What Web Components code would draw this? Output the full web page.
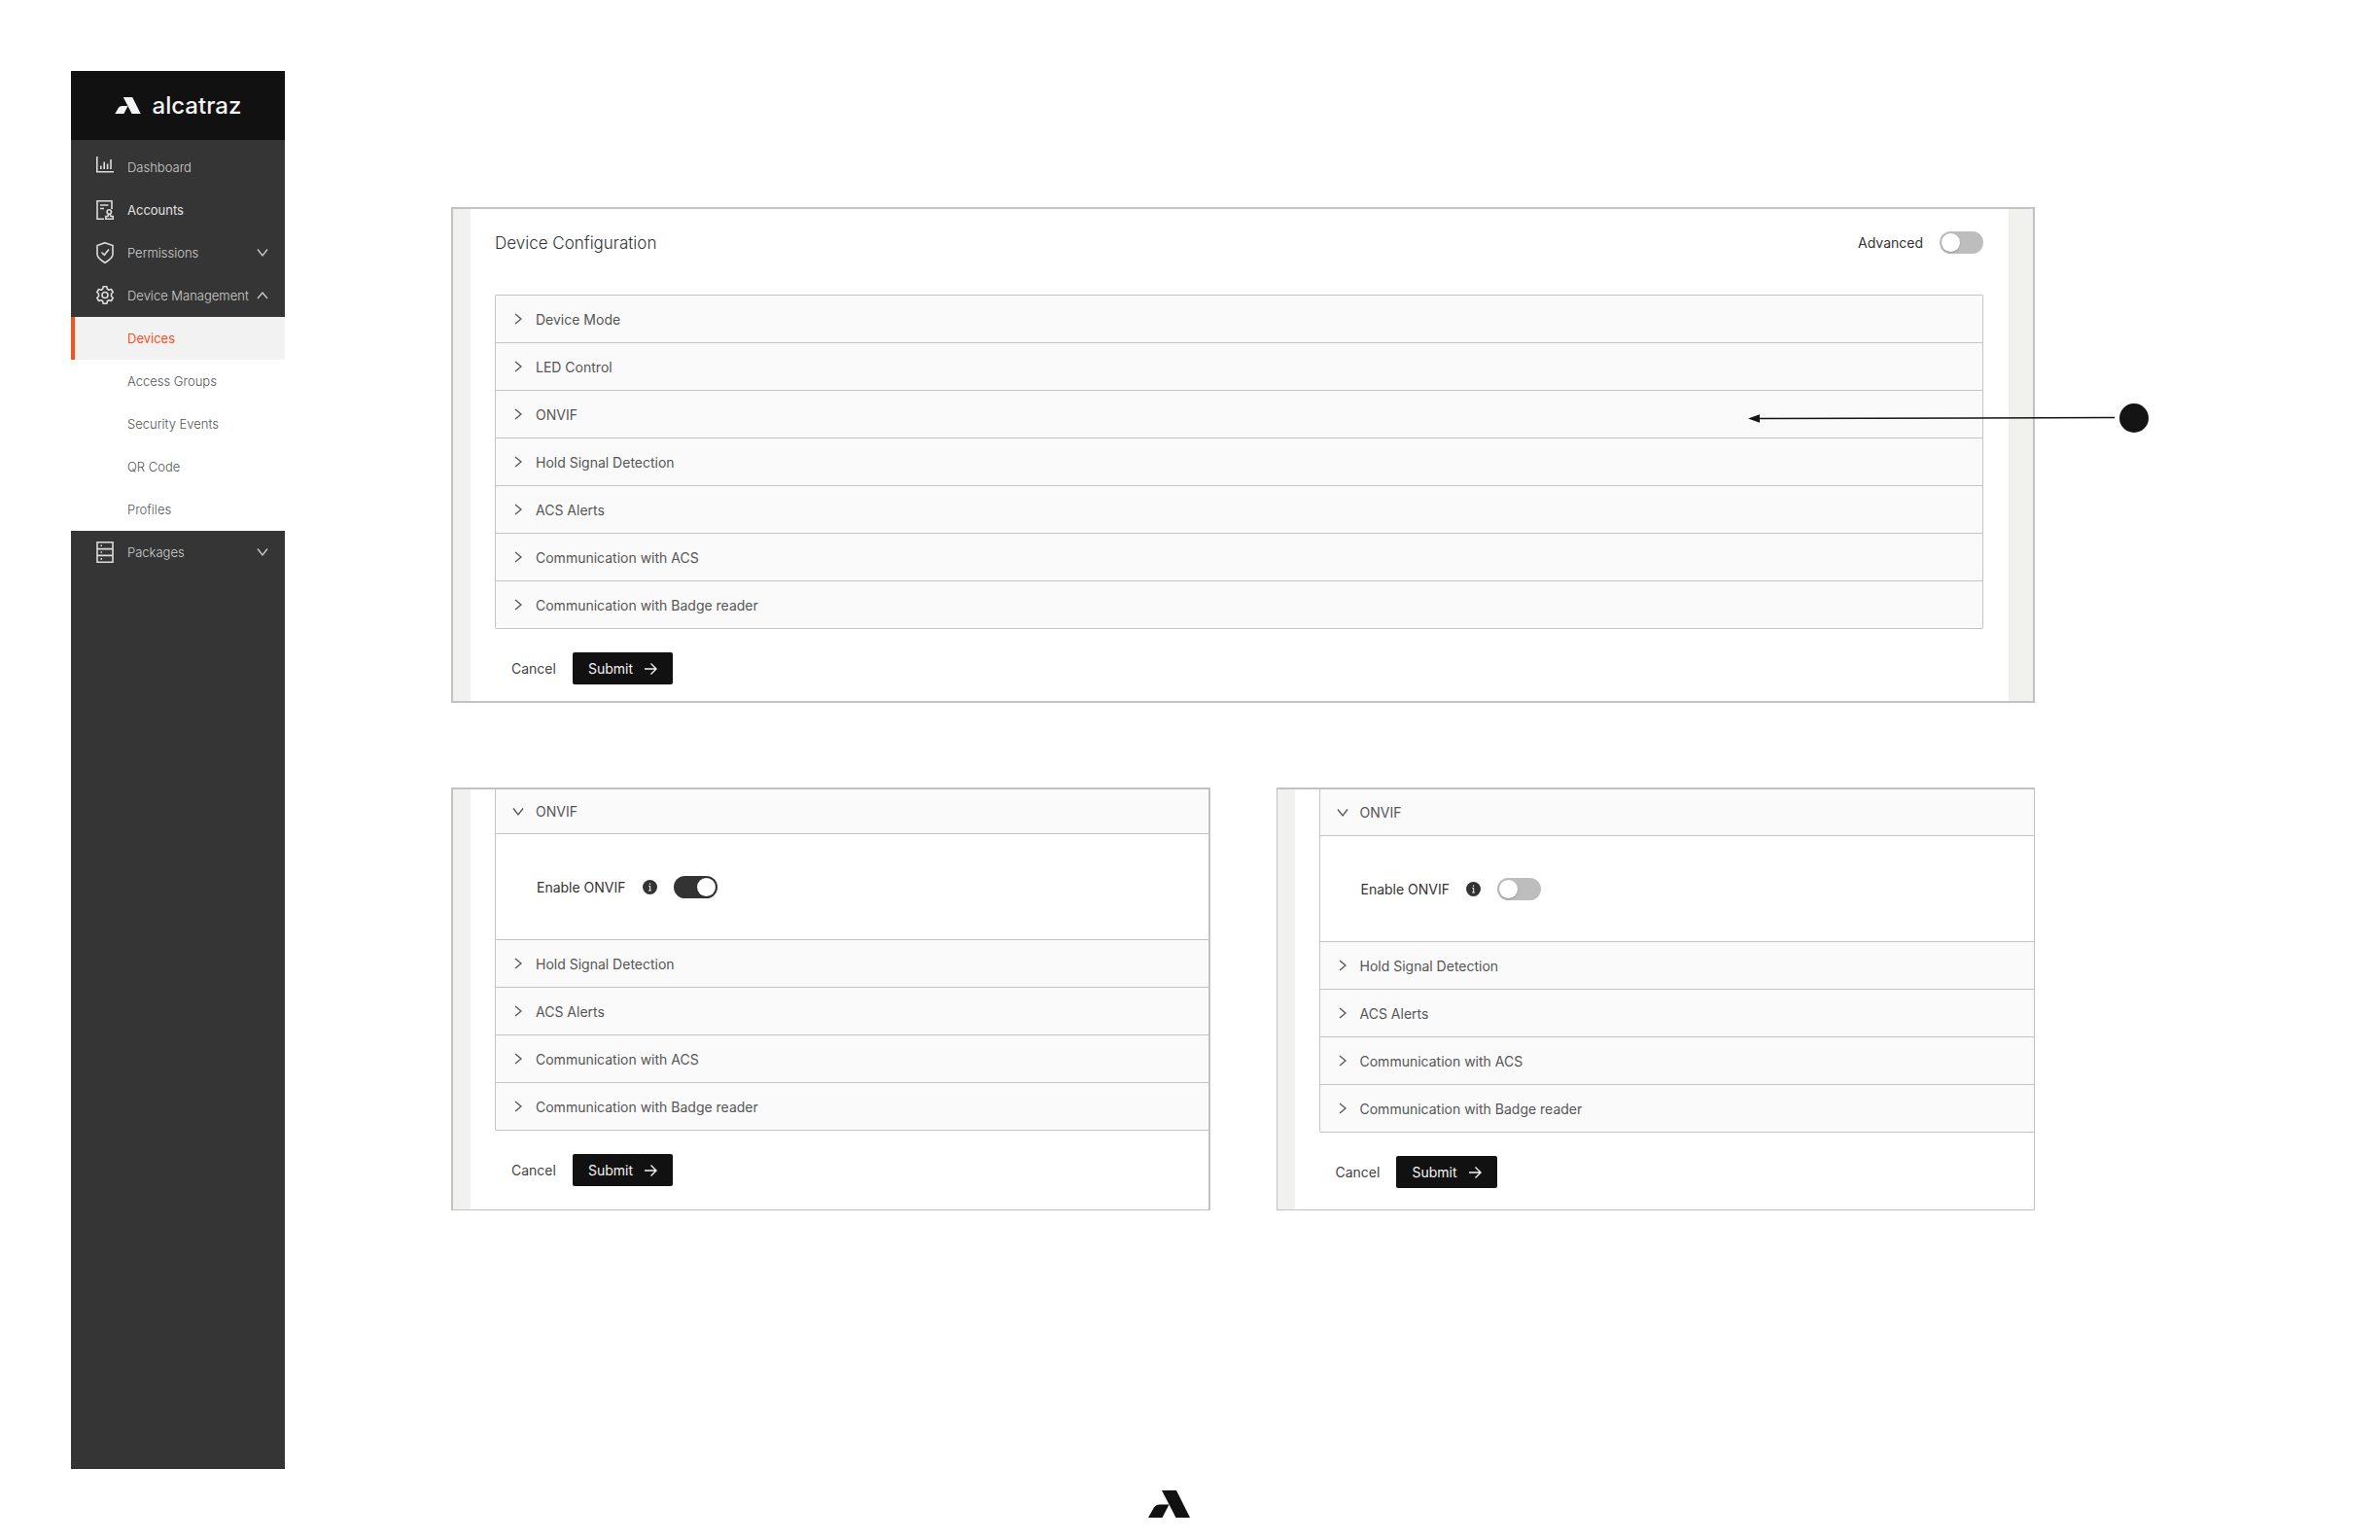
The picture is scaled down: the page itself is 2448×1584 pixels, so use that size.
<!DOCTYPE html>
<html lang="en">
<head>
<meta charset="utf-8">
<title>Alcatraz – Device Configuration</title>
<style>
  html { background: #fff; }
  body { margin: 0; font-family: Inter, "Liberation Sans", sans-serif; font-size: 14px; color: #555; }
</style>
</head>
<body>
<admin-page>
  <side-bar slot="nav">
    <nav-item icon="chart">Dashboard</nav-item>
    <nav-item icon="account" strong>Accounts</nav-item>
    <nav-item icon="shield" arrow="down">Permissions</nav-item>
    <nav-item icon="gear" arrow="up">Device Management</nav-item>
    <nav-item sub active>Devices</nav-item>
    <nav-item sub>Access Groups</nav-item>
    <nav-item sub>Security Events</nav-item>
    <nav-item sub>QR Code</nav-item>
    <nav-item sub>Profiles</nav-item>
    <nav-item icon="server" arrow="down">Packages</nav-item>
  </side-bar>

  <config-panel full>
    <panel-header slot="header">Device Configuration
      <toggle-switch slot="action">Advanced</toggle-switch>
    </panel-header>
    <accordion-row>Device Mode</accordion-row>
    <accordion-row>LED Control</accordion-row>
    <accordion-row>ONVIF</accordion-row>
    <accordion-row>Hold Signal Detection</accordion-row>
    <accordion-row>ACS Alerts</accordion-row>
    <accordion-row>Communication with ACS</accordion-row>
    <accordion-row>Communication with Badge reader</accordion-row>
    <callout-arrow slot="callout"></callout-arrow>
  </config-panel>

  <config-panel cut="left">
    <accordion-row open>ONVIF<toggle-switch slot="body" info checked>Enable ONVIF</toggle-switch></accordion-row>
    <accordion-row>Hold Signal Detection</accordion-row>
    <accordion-row>ACS Alerts</accordion-row>
    <accordion-row>Communication with ACS</accordion-row>
    <accordion-row>Communication with Badge reader</accordion-row>
  </config-panel>

  <config-panel cut="right">
    <accordion-row open>ONVIF<toggle-switch slot="body" info>Enable ONVIF</toggle-switch></accordion-row>
    <accordion-row>Hold Signal Detection</accordion-row>
    <accordion-row>ACS Alerts</accordion-row>
    <accordion-row>Communication with ACS</accordion-row>
    <accordion-row>Communication with Badge reader</accordion-row>
  </config-panel>
</admin-page>

<script>
const define = (name, render) => customElements.define(name, class extends HTMLElement {
  connectedCallback() {
    if (this.shadowRoot) return;
    this.attachShadow({ mode: 'open' }).innerHTML = render(this);
  }
});

const LOGO = `<svg viewBox="0 0 43 28" fill="currentColor" aria-hidden="true"><path d="M14 0H29L43 28H28.500L21.500 14.500Z"/><path d="M0 28L6 17.500Q8 14.500 12 14.500H21.500L14.500 28Z"/></svg>`;

const ICONS = {
  chart: `<path d="M.8 1V16.700H18M4.800 14V10.500M8.200 14V6.500M11.600 14V8.500M15 14V4"/>`,
  account: `<path d="M8 21.300H1V2.700H16V11M4 7H12.500M4 10.500H8"/><circle cx="13.300" cy="14" r="2.200"/><path d="M12.600 16.200L12 18.500H9.800V21.300H17.300V18.500H15L14.200 16.200"/>`,
  shield: `<path d="M9 1.700L17 4.500V13.500Q17 17.500 9 22.300Q1 17.500 1 13.500V4.500ZM5.500 11.500L8.300 14.300L13 8.500"/>`,
  gear: `<circle cx="9" cy="11.500" r="3"/><path d="M7.200 2.800H10.800L11.400 5.200L13 6.200L15.400 5.500L17.200 8.500L15.500 10.200V12.800L17.200 14.500L15.400 17.500L13 16.800L11.400 17.800L10.800 20.200H7.200L6.600 17.800L5 16.800L2.600 17.500L.8 14.500L2.500 12.800V10.200L.8 8.500L2.600 5.500L5 6.200L6.600 5.200Z" stroke-linejoin="round"/>`,
  server: `<path d="M1 1.700H17V22.300H1ZM1 8.600H17M1 15.400H17M4.500 5.200H6M4.500 12H6M4.500 18.900H6"/>`
};

const CHEVRONS = {
  right: `<path d="M3 1L9 6L3 11"/>`,
  down: `<path d="M1 2.500L6 9L11 2.500"/>`,
  up: `<path d="M1 9L6 3L11 9"/>`
};
const chevron = dir => `<svg class="chevron" width="12" height="12" viewBox="0 0 12 12" fill="none" stroke="currentColor" stroke-width="1.300" aria-hidden="true">${CHEVRONS[dir]}</svg>`;

define('brand-logo', () => `
  <style>
    :host { display: block; width: 43px; color: #111; }
    svg { display: block; width: 100%; }
  </style>${LOGO}`);

define('admin-page', () => `
  <style>
    :host { display: grid; grid-template: 1fr auto / 220px 1fr; column-gap: 171px; box-sizing: border-box; min-height: 100vh; padding: 73px 0 0 73px; }
    main { display: grid; grid-template-columns: 1fr 1fr; gap: 87px 68px; align-content: start; padding: 140px 355px 0 0; }
    footer { grid-column: 1 / -1; display: flex; justify-content: center; height: 51px; padding: 22px 117px 0 0; }
  </style>
  <slot name="nav"></slot>
  <main><slot></slot></main>
  <footer><brand-logo></brand-logo></footer>`);

define('side-bar', () => `
  <style>
    :host { display: flex; flex-direction: column; background: #353535; font-size: 13px; font-weight: 300; }
    header { display: flex; align-items: center; justify-content: center; gap: 12px; height: 71px; margin-bottom: 6px; background: #111; color: #f4f4f4; font-size: 24px; font-weight: 500; }
    brand-logo { width: 27px; color: inherit; }
    nav { display: flex; flex-direction: column; }
  </style>
  <header><brand-logo></brand-logo><span>alcatraz</span></header>
  <nav><slot></slot></nav>`);

define('nav-item', el => `
  <style>
    :host { display: block; color: #cfcfcf; }
    :host([strong]) { color: #e2e2e2; font-weight: 400; }
    :host([sub]) { background: #fff; color: #555; }
    :host([active]) { background: #f2f2f2; color: #f9501c; font-weight: 400; box-shadow: inset 4px 0 #f9501c; }
    a { display: flex; align-items: center; height: 44px; padding: 0 17px 0 26px; color: inherit; text-decoration: none; }
    span { flex: 1; padding-left: 14px; white-space: nowrap; }
    svg { flex: none; }
    .icon { width: 18px; height: 24px; }
  </style>
  <a href="#">
    <svg class="icon" viewBox="0 0 18 24" fill="none" stroke="#dcdcdc" stroke-width="1.600" aria-hidden="true">${ICONS[el.getAttribute('icon')] || ''}</svg>
    <span><slot></slot></span>${el.hasAttribute('arrow') ? chevron(el.getAttribute('arrow')) : ''}
  </a>`);

define('config-panel', el => `
  <style>
    :host { position: relative; display: flex; min-width: 0; border: 2px solid #c2c2c2; background: linear-gradient(#f1f1ef, #f1f1ef) left / 18px 100% no-repeat; }
    :host([full]) { grid-column: 1 / -1; background: #f1f1ef; }
    :host([cut]) { border-bottom-width: 1px; }
    :host([cut="right"]) { border-left-width: 1px; border-right-width: 1px; --first-row: 47px; }
    section { flex: 1; min-width: 0; margin-left: 18px; padding: 0 0 22px 25px; background: #fff; }
    :host([full]) section { margin-right: 25px; padding: 23px 26px 17px 25px; }
    .list { border: 1px solid #c4c4c4; border-bottom: 0; border-radius: 2px; }
    :host([cut]) .list { border-top: 0; border-right: 0; border-radius: 0 0 0 2px; }
    .actions { display: flex; gap: 17px; padding: 24px 0 0 17px; }
    button { display: flex; align-items: center; gap: 12px; height: 33px; padding: 0; border: 0; border-radius: 2px; background: none; color: #444; font: inherit; }
    .submit { padding: 0 16px; background: #111; color: #f4f4f4; }
  </style>
  <section>
    <slot name="header"></slot>
    <div class="list"><slot></slot></div>
    <div class="actions">
      <button type="button">Cancel</button>
      <button type="submit" class="submit">Submit
        <svg width="13" height="12" viewBox="0 0 13 12" fill="none" stroke="currentColor" stroke-width="1.400" aria-hidden="true"><path d="M0 6H12M6.500 .6L12 6L6.500 11.400"/></svg>
      </button>
    </div>
  </section>
  <slot name="callout"></slot>`);

define('panel-header', () => `
  <style>
    :host { display: flex; align-items: center; justify-content: space-between; height: 23px; margin-bottom: 42px; }
    h1 { margin: 0; font-size: 17px; font-weight: 300; color: #333; }
  </style>
  <h1><slot></slot></h1><slot name="action"></slot>`);

define('accordion-row', el => `
  <style>
    :host { display: block; border-bottom: 1px solid #c4c4c4; }
    button { display: flex; align-items: center; gap: 12px; width: 100%; height: 48px; padding: 0 17px; border: 0; background: #fafafa; color: #555; font: inherit; text-align: left; }
    :host([open]) button { height: var(--first-row, 45px); }
    .body { display: flex; align-items: center; height: 108px; padding-left: 42px; border-top: 1px solid #c4c4c4; background: #fff; }
  </style>
  <button type="button" aria-expanded="${el.hasAttribute('open')}">${chevron(el.hasAttribute('open') ? 'down' : 'right')}<span><slot></slot></span></button>
  ${el.hasAttribute('open') ? '<div class="body"><slot name="body"></slot></div>' : ''}`);

define('toggle-switch', el => `
  <style>
    :host { display: flex; align-items: center; gap: 17px; color: #333; }
    input { appearance: none; display: flex; align-items: center; box-sizing: border-box; width: 45px; height: 23px; margin: 0; padding: 2px; border-radius: 12px; background: #bdbdbd; }
    input::before { content: ""; width: 19px; height: 19px; border-radius: 50%; background: #fff; box-shadow: 0 1px 2px rgba(0,0,0,.2); }
    input:checked { justify-content: flex-end; background: #333; }
  </style>
  <label for="toggle"><slot></slot></label>
  ${el.hasAttribute('info') ? '<svg width="15" height="15" viewBox="0 0 15 15" aria-hidden="true"><circle cx="7.500" cy="7.500" r="7.500" fill="#333"/><path d="M6.300 6.500H7.600V11M7.500 3.500V5M6 11H9" stroke="#ddd" stroke-width="1.200" fill="none"/></svg>' : ''}
  <input id="toggle" type="checkbox" role="switch" ${el.hasAttribute('checked') ? 'checked' : ''}>`);

/* Pointer that runs from the margin into the ONVIF row. */
define('callout-arrow', () => `
  <style>
    :host { position: absolute; top: 200px; right: -120px; }
    svg { display: block; }
  </style>
  <svg width="413" height="30" viewBox="0 0 413 30" fill="#141414" aria-hidden="true">
    <path d="M8 15.500L377 14.500" stroke="#141414" stroke-width="1.500"/>
    <path d="M0 15.500L12 11.300V19.700Z"/><circle cx="397" cy="15" r="15"/>
  </svg>`);
</script>
</body>
</html>
